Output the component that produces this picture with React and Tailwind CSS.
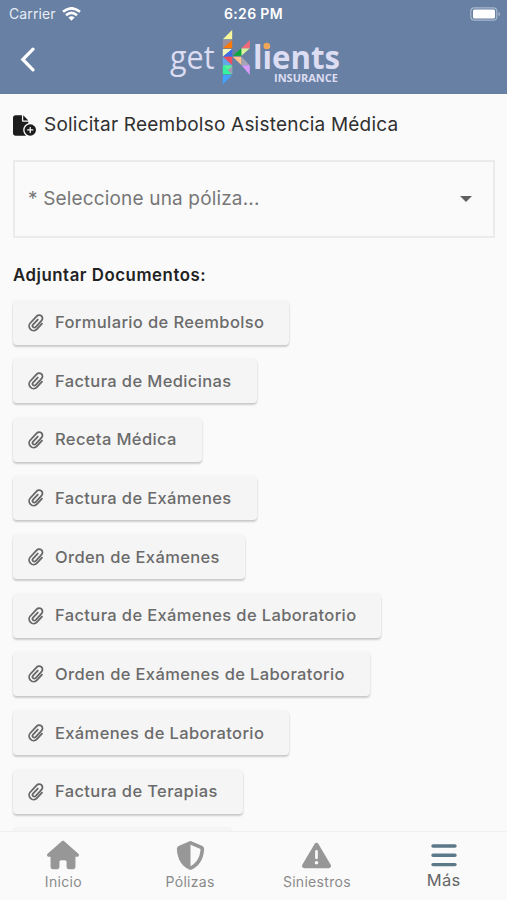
import { FaFileCirclePlus, FaHouse, FaShieldHalved, FaTriangleExclamation } from 'react-icons/fa6';

const documentos = [
  'Formulario de Reembolso',
  'Factura de Medicinas',
  'Receta Médica',
  'Factura de Exámenes',
  'Orden de Exámenes',
  'Factura de Exámenes de Laboratorio',
  'Orden de Exámenes de Laboratorio',
  'Exámenes de Laboratorio',
  'Factura de Terapias',
];

function Logo() {
  return (
    <svg width="174" height="60" viewBox="168 27 174 60" fontFamily="'Open Sans', sans-serif" fill="#dcdcf2">
      <text x="170" y="68.5" fontSize="32" textLength="44.5" lengthAdjust="spacingAndGlyphs">get</text>
      <g transform="translate(215.5 25) scale(0.3333)">
        <path d="M22 43L50 15V43Z" fill="#f8f79c" />
        <path d="M22 45H50L22 70Z" fill="#9b8f9d" />
        <path d="M50 45V70H22Z" fill="#ff7908" />
        <path d="M22 72H50L22 95Z" fill="#f0f6c0" />
        <path d="M50 72V95H22Z" fill="#426be6" />
        <path d="M22 95H50V121Z" fill="#f04e5e" />
        <path d="M22 95V121H50Z" fill="#61a9e8" />
        <path d="M22 121V148H50Z" fill="#34f3a0" />
        <path d="M22 121H50V148Z" fill="#53f69a" />
        <path d="M22 150H50L22 178Z" fill="#42a2ff" />
        <path d="M50 123V148L36 136Z" fill="#a599b0" />
        <path d="M52 92L78 70V92Z" fill="#08a936" />
        <path d="M78 70H103L78 92Z" fill="#d9f5a0" />
        <path d="M78 70L103 45V70Z" fill="#f26a78" />
        <path d="M52 95H78V121Z" fill="#ffc18f" />
        <path d="M78 95L103 121H78Z" fill="#a4a4b4" />
        <path d="M78 121H103V150Z" fill="#d79bfa" />
      </g>
      <text x="253" y="68.5" fontSize="32" fontWeight="700" textLength="87" lengthAdjust="spacingAndGlyphs">lients</text>
      <circle cx="266.7" cy="46" r="3.2" fill="#f2a654" />
      <text x="274" y="82" fontSize="11" fontWeight="700" textLength="64" lengthAdjust="spacingAndGlyphs">INSURANCE</text>
    </svg>
  );
}

function ClipIcon() {
  return (
    <svg width="17" height="18" viewBox="-8.5 -9 17 18" fill="none" stroke="#666" strokeWidth="1.8" strokeLinecap="round">
      <path
        transform="rotate(43)"
        d="M4.5 -3.2V4.2A4.5 4.5 0 0 1 -4.5 4.2V-5.2A3.3 3.3 0 0 1 2.1 -5.2V3.6A1.6 1.6 0 0 1 -1.4 3.6V-3.4"
      />
    </svg>
  );
}

function StatusBar() {
  return (
    <div className="grid h-[27px] grid-cols-3 items-center px-[9px] text-[14px] text-white">
      <div className="flex items-center gap-[6px] text-[#e7edf5]">
        <span className="tracking-[0.1px]">Carrier</span>
        <svg width="19" height="14" viewBox="0 0 19 14" fill="none" stroke="#fff" strokeWidth="2.6">
          <path d="M1 4.8Q9.5 -2.2 18 4.8" />
          <path d="M4 8.2Q9.5 3.6 15 8.2" />
          <path d="M6.4 10.5Q9.5 7.8 12.6 10.5L9.5 13.8Z" fill="#fff" stroke="none" />
        </svg>
      </div>
      <span className="text-center font-semibold tracking-[0.35px] whitespace-nowrap">6:26 PM</span>
      <svg className="mr-[-3px] justify-self-end" width="31" height="14" viewBox="0 0 31 14">
        <rect x="0.8" y="0.8" width="26" height="12.4" rx="3.5" fill="none" stroke="#a8b8ce" strokeWidth="1.2" />
        <rect x="3" y="2.5" width="22" height="9" rx="1.5" fill="#fff" />
        <path d="M28.5 4.7Q32 7 28.5 9.3Z" fill="#a8b8ce" />
      </svg>
    </div>
  );
}

function NavItem({ icon, label, active }) {
  return (
    <div className="flex flex-1 flex-col items-center pt-[7px]">
      <div className="flex h-8 items-center text-[#979797]">{icon}</div>
      <span
        className={
          active
            ? 'pt-px text-[16.5px] leading-[17px] tracking-[0.3px] text-[#666]'
            : 'pt-[2px] text-[14px] leading-[17px] tracking-[0.3px] text-[#8a8a8a]'
        }
      >
        {label}
      </span>
    </div>
  );
}

export default function App() {
  return (
    <div className="flex h-[900px] w-[507px] flex-col overflow-hidden bg-[#fafafa] font-['Inter',sans-serif]">
      <header className="h-[94px] shrink-0 bg-[#6880a3]">
        <StatusBar />
        <div className="grid h-[60px] grid-cols-[168px_174px_1fr] items-center">
          <svg className="mt-[5px] ml-[20px]" width="16" height="25" viewBox="0 0 16 25" fill="none" stroke="#fff" strokeWidth="3.2" strokeLinecap="round">
            <path d="M13 2.2L2.8 12.5L13 22.8" />
          </svg>
          <Logo />
        </div>
      </header>

      <main className="min-h-0 flex-1 overflow-hidden px-[13px]">
        <div className="flex h-[66px] items-center gap-[8px] pb-[4px] text-[#303030]">
          <FaFileCirclePlus size={23} className="text-[#1c1c1c]" />
          <h1 className="text-[19px] tracking-[0.21px] whitespace-nowrap">Solicitar Reembolso Asistencia Médica</h1>
        </div>

        <div className="mr-[-1px] flex h-[78px] items-center justify-between border-2 border-[#ebebeb] pr-[21px] pl-[13px] text-[#777]">
          <span className="text-[19px] tracking-[0.16px]">* Seleccione una póliza...</span>
          <svg width="12" height="6" viewBox="0 0 12 6">
            <path d="M0 0H12L6 6Z" fill="#606060" />
          </svg>
        </div>

        <h2 className="mt-[25px] text-[16.8px] leading-6 font-semibold tracking-[0.55px] text-[#222]">
          Adjuntar Documentos:
        </h2>

        <div className="mt-[13.5px] flex flex-col items-start gap-[14.65px]">
          {documentos.map((doc) => (
            <button
              key={doc}
              className="flex h-11 items-center gap-[10px] rounded-[4px] bg-[#f5f5f5] pr-[25px] pl-[15px] text-[16.5px] font-medium tracking-[0.37px] whitespace-nowrap text-[#6b6b6b] shadow-[0_2px_2px_rgba(0,0,0,0.18),0_0_3px_rgba(0,0,0,0.06)]"
            >
              <ClipIcon />
              {doc}
            </button>
          ))}
          {/* next row, only its top edge shows above the nav */}
          <div className="h-11 w-[219px] shrink-0 rounded-[4px] bg-[#f5f5f5] shadow-[0_0_3px_rgba(0,0,0,0.06)]" />
        </div>
      </main>

      <nav className="flex h-[69px] shrink-0 border-t border-[#f0f0f0] bg-[#fafafa]">
        <NavItem label="Inicio" icon={<FaHouse size={32} />} />
        <NavItem label="Pólizas" icon={<FaShieldHalved size={29} />} />
        <NavItem label="Siniestros" icon={<FaTriangleExclamation size={29} />} />
        <NavItem
          label="Más"
          active
          icon={
            <svg width="26" height="23" viewBox="0 0 26 23" stroke="#5b7889" strokeWidth="3.4" strokeLinecap="round">
              <path d="M2 2H24M2 11.3H24M2 20.6H24" />
            </svg>
          }
        />
      </nav>
    </div>
  );
}
